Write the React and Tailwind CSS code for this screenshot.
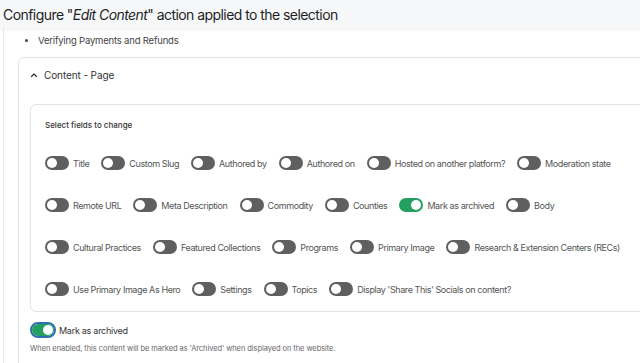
const rows = [
  [
    { label: 'Title' },
    { label: 'Custom Slug' },
    { label: 'Authored by' },
    { label: 'Authored on' },
    { label: 'Hosted on another platform?' },
    { label: 'Moderation state' },
  ],
  [
    { label: 'Remote URL' },
    { label: 'Meta Description' },
    { label: 'Commodity' },
    { label: 'Counties' },
    { label: 'Mark as archived', on: true },
    { label: 'Body' },
  ],
  [
    { label: 'Cultural Practices' },
    { label: 'Featured Collections' },
    { label: 'Programs' },
    { label: 'Primary Image' },
    { label: 'Research & Extension Centers (RECs)' },
  ],
  [
    { label: 'Use Primary Image As Hero' },
    { label: 'Settings' },
    { label: 'Topics' },
    { label: "Display 'Share This' Socials on content?" },
  ],
]

function Toggle({ on }) {
  return (
    <span
      className={
        on
          ? 'flex h-[14px] w-6 shrink-0 items-center justify-end rounded-full bg-[#23a05f] px-[2px]'
          : 'flex h-[14px] w-6 shrink-0 items-center justify-start rounded-full bg-[#5f5f5f] px-[2px]'
      }
    >
      <span className="h-[10px] w-[10px] rounded-full bg-white" />
    </span>
  )
}

export default function App() {
  return (
    <div className="h-[363px] w-full overflow-hidden bg-white font-['Inter',sans-serif] text-[#333]">
      {/* Dialog title */}
      <div className="relative z-10 flex h-[28px] items-center bg-[#f6f7f9] pl-[3px] shadow-[0_2px_4px_rgba(0,0,0,0.06)]">
        <h1 className="text-[14px] tracking-[-0.04em] text-[#1f1f1f]">
          Configure "<em>Edit Content</em>" action applied to the selection
        </h1>
      </div>

      <div className="ml-[3px] h-full border-l border-[#ececec] pl-[14px]">
        <ul className="list-disc pl-[20px] pt-[6px] text-[9.5px] tracking-[-0.02em] text-[#444]">
          <li>Verifying Payments and Refunds</li>
        </ul>

        {/* Content - Page */}
        <div className="-mr-6 mt-[9px] rounded-md border border-[#e3e3e3] pb-4 pl-[11px]">
          <div className="flex h-[33px] items-center gap-[6px] pt-[1px] text-[10px] tracking-[-0.01em] text-[#333]">
            <svg width="8" height="8" viewBox="0 0 8 8" fill="none" stroke="#333" strokeWidth="1.2" strokeLinecap="round" strokeLinejoin="round">
              <path d="M1.5 5.5L4 3l2.5 2.5" />
            </svg>
            <span>Content - Page</span>
          </div>

          <div className="mt-[13px] rounded-md border border-[#e3e3e3] pb-[15px] pl-[14px]">
            <div className="pb-[25px] pt-[14px] text-[8px] font-medium text-[#333]">Select fields to change</div>
            <div className="flex flex-col gap-[28px]">
              {rows.map((row, i) => (
                <div key={i} className="flex h-[14px] items-center gap-3 whitespace-nowrap">
                  {row.map((f) => (
                    <label key={f.label} className="flex items-center gap-1 text-[9px] tracking-[-0.045em] text-[#555]">
                      <Toggle on={f.on} />
                      <span>{f.label}</span>
                    </label>
                  ))}
                </div>
              ))}
            </div>
          </div>

          <div className="mt-[10px] flex items-center gap-[3px]">
            <span className="rounded-full border-2 border-[#2f6db5]">
              <span className="flex h-[12px] w-[22px] items-center justify-end rounded-full bg-[#23a05f] px-[1px]">
                <span className="h-[10px] w-[10px] rounded-full bg-white" />
              </span>
            </span>
            <span className="text-[9px] tracking-[-0.03em] text-[#333]">Mark as archived</span>
          </div>
          <p className="mt-[5px] text-[7.5px] tracking-[-0.01em] text-[#666]">
            When enabled, this content will be marked as 'Archived' when displayed on the website.
          </p>
        </div>
      </div>
    </div>
  )
}
